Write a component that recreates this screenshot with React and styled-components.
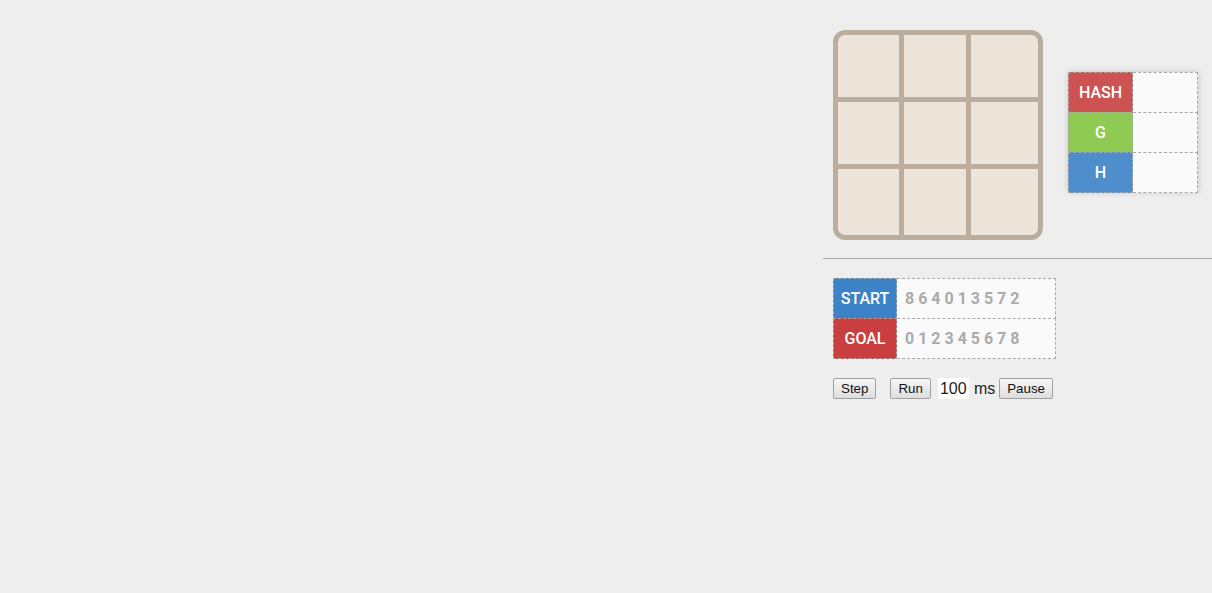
import React from "react";
import styled, { createGlobalStyle } from "styled-components";

const Global = createGlobalStyle`
  html, body { margin: 0; padding: 0; background: #eeeeee; }
  body { font-family: Roboto, "Liberation Sans", Arial, sans-serif; height: 593px; overflow: hidden; }
`;

const Page = styled.div`
  display: flex;
  width: 1212px;
  height: 593px;
`;

const Spacer = styled.div`
  width: 823px;
  flex: none;
`;

const Panel = styled.div`
  flex: 1;
  display: flex;
  flex-direction: column;
`;

const TopRow = styled.div`
  display: flex;
  align-items: flex-start;
  padding: 30px 0 0 10px;
`;

const Board = styled.div`
  width: 200px;
  height: 200px;
  border: 5px solid #bcae9f;
  border-radius: 12px;
  background: #bcae9f;
  display: grid;
  grid-template-columns: 61px 62px 67px;
  grid-template-rows: 62px 62px 66px;
  gap: 5px;
  overflow: hidden;
`;

const Cell = styled.div`
  background: #ede4da;
`;

const InfoTable = styled.div`
  margin: 42px 0 0 25px;
  display: grid;
  grid-template-columns: 65px 65px;
  grid-auto-rows: 40px;
  box-shadow: 0 0 6px rgba(0, 0, 0, 0.18);
`;

const Label = styled.div`
  background: ${(p) => p.$bg};
  color: #ffffff;
  font-family: Roboto, "Liberation Sans", Arial, sans-serif;
  font-weight: 500;
  font-size: 16px;
  display: flex;
  align-items: center;
  justify-content: center;
  border: 1px dashed #a8a8a8;
  box-sizing: border-box;
  margin: 0 0 -1px 0;
`;

const Value = styled.div`
  background: #fafafa;
  border: 1px dashed #a8a8a8;
  border-left: none;
  box-sizing: border-box;
  margin: 0 0 -1px 0;
  display: flex;
  align-items: center;
  padding-left: 8px;
  color: #aaaaaa;
  font-weight: 700;
  font-size: 16px;
  white-space: pre;
`;

const Rule = styled.div`
  margin-top: 18px;
  height: 1px;
  background: #a9a9a9;
`;

const StateTable = styled.div`
  margin: 19px 0 0 10px;
  display: grid;
  grid-template-columns: 64px 159px;
  grid-auto-rows: 40px;
  width: 223px;
`;

const Controls = styled.div`
  margin: 20px 0 0 10px;
  display: flex;
  align-items: center;
  height: 21px;
`;

const Button = styled.button`
  height: 21px;
  padding: 0 7px;
  margin: 0 ${(p) => p.$mr || 0}px 0 0;
  font-family: "Liberation Sans", Arial, sans-serif;
  font-size: 13.33px;
  color: #111;
  background: linear-gradient(#f6f6f6, #dedede);
  border: 1px solid #a0a0a0;
  border-radius: 2px;
  line-height: 17px;
`;

const MsInput = styled.div`
  width: 31px;
  height: 21px;
  background: #ffffff;
  font-family: "Liberation Sans", Arial, sans-serif;
  font-size: 16px;
  line-height: 21px;
  color: #222;
  padding-left: 2px;
  box-sizing: border-box;
`;

const Unit = styled.span`
  font-family: "Liberation Sans", Arial, sans-serif;
  font-size: 16px;
  color: #222;
  margin: 0 4px 0 5px;
`;

export default function App() {
  return (
    <>
      <Global />
      <Page>
        <Spacer />
        <Panel>
          <TopRow>
            <Board>
              {Array.from({ length: 9 }).map((_, i) => (
                <Cell key={i} />
              ))}
            </Board>
            <InfoTable>
              <Label $bg="#cd5252">HASH</Label>
              <Value />
              <Label $bg="#8fca52">G</Label>
              <Value />
              <Label $bg="#4f8ecd">H</Label>
              <Value />
            </InfoTable>
          </TopRow>
          <Rule />
          <StateTable>
            <Label $bg="#3b82c6">START</Label>
            <Value>8 6 4 0 1 3 5 7 2</Value>
            <Label $bg="#c93e3e">GOAL</Label>
            <Value>0 1 2 3 4 5 6 7 8</Value>
          </StateTable>
          <Controls>
            <Button $mr={14}>Step</Button>
            <Button $mr={7}>Run</Button>
            <MsInput>100</MsInput>
            <Unit>ms</Unit>
            <Button>Pause</Button>
          </Controls>
        </Panel>
      </Page>
    </>
  );
}
